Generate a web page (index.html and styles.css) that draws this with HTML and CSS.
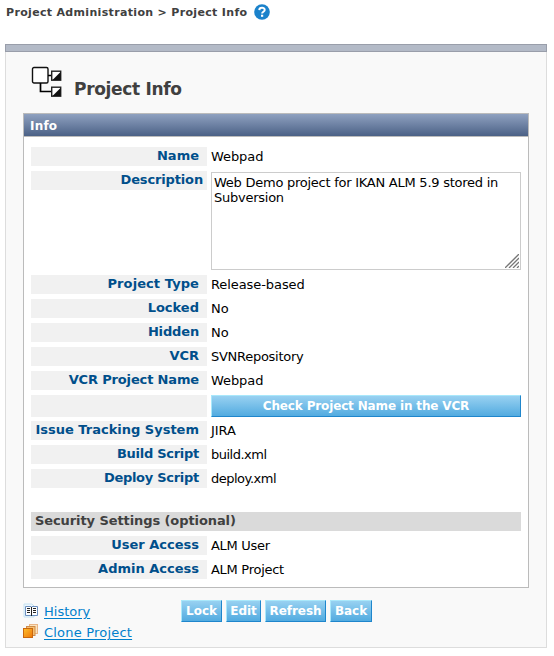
FILE: index.html
```html
<!DOCTYPE html>
<html lang="en">
<head>
<meta charset="utf-8">
<title>Project Info</title>
<link rel="stylesheet" href="styles.css">
</head>
<body>
<header class="crumbs">
  <span class="crumb-text">Project Administration &gt; Project Info</span>
  <svg class="help" width="16" height="16" viewBox="0 0 16 16"><circle cx="8" cy="8" r="7.8" fill="#1b82cb"/><path d="M5.3 6.1C5.4 3 10.7 3 10.7 6c0 1.8-2.6 1.8-2.6 3.6" fill="none" stroke="#fff" stroke-width="2"/><rect x="7" y="10.7" width="2.2" height="2.1" fill="#fff"/></svg>
</header>
<div class="bar"></div>
<main class="page">
  <div class="title">
    <svg width="32" height="32" viewBox="0 0 32 32"><rect x="1.5" y="1.5" width="15.500" height="15.500" rx="1.5" fill="#fff" stroke="#111" stroke-width="1.4"/><path d="M17 9.500h4M9.500 17v8.500h11" fill="none" stroke="#000" stroke-width="1.7"/><rect x="20.700" y="5.200" width="9" height="9" fill="#fff" stroke="#222" stroke-width="1.4"/><path d="M21.500 14h8V6z" fill="#111"/><rect x="20.700" y="21.200" width="9" height="9" fill="#fff" stroke="#222" stroke-width="1.4"/><path d="M21.500 30h8v-8z" fill="#111"/></svg>
    <h1>Project Info</h1>
  </div>
  <section class="panel">
    <h2>Info</h2>
    <div class="rows">
      <div class="row"><div class="label">Name</div><div class="value">Webpad</div></div>
      <div class="row tall"><div class="label flush snug">Description</div><div class="area"><span>Web Demo project for IKAN ALM 5.9 stored in<br>Subversion</span><svg class="grip" width="14" height="14" viewBox="0 0 14 14"><path d="M0 14L14 0M4 14L14 4M8 14l6-6M12 14l2-2" stroke="#777" stroke-width="1.3"/></svg></div></div>
      <div class="row"><div class="label loose">Project Type</div><div class="value">Release-based</div></div>
      <div class="row"><div class="label">Locked</div><div class="value">No</div></div>
      <div class="row"><div class="label snug">Hidden</div><div class="value">No</div></div>
      <div class="row"><div class="label">VCR</div><div class="value tight">SVNRepository</div></div>
      <div class="row"><div class="label snug">VCR Project Name</div><div class="value">Webpad</div></div>
      <div class="row action"><div class="label"></div><button class="btn wide">Check Project Name in the VCR</button></div>
      <div class="row"><div class="label">Issue Tracking System</div><div class="value">JIRA</div></div>
      <div class="row"><div class="label tight">Build Script</div><div class="value tighter">build.xml</div></div>
      <div class="row"><div class="label tight">Deploy Script</div><div class="value tighter">deploy.xml</div></div>
      <h3>Security Settings (optional)</h3>
      <div class="row"><div class="label">User Access</div><div class="value tight">ALM User</div></div>
      <div class="row"><div class="label">Admin Access</div><div class="value tight">ALM Project</div></div>
    </div>
  </section>
  <footer class="foot">
    <nav class="links">
      <div class="link"><svg width="16" height="16" viewBox="0 0 16 16"><path d="M1 1h8l2 2v11H1z" fill="#eef7fc" stroke="#c5e2f2"/><path d="M2.5 3.5H8l.5.5.5-.5h5.5v9H9l-.5.5-.5-.5H2.5z" fill="#fff" stroke="#6b8fc0"/><path d="M4 5.5h3M4 7.5h3M4 9.5h3M10 5.5h3M10 7.5h3M10 9.5h3" stroke="#222"/><path d="M8.5 4v9" stroke="#222"/></svg><a href="#">History</a></div>
      <div class="link"><svg width="16" height="16" viewBox="0 0 16 16"><defs><linearGradient id="o" x1="0" y1="0" x2="1" y2="1"><stop offset="0" stop-color="#ffc02c"/><stop offset="1" stop-color="#ee7508"/></linearGradient></defs><rect x="6.5" y=".5" width="8" height="9" fill="#fbe3bd" stroke="#e9b586"/><rect x="3.5" y="2.5" width="8.500" height="9" fill="#f5c173" stroke="#cd8a4a"/><rect x=".5" y="4.500" width="9" height="9" fill="url(#o)" stroke="#c9660e"/></svg><a href="#" class="clone">Clone Project</a></div>
    </nav>
    <div class="buttons"><button class="btn lock">Lock</button><button class="btn edit">Edit</button><button class="btn refresh">Refresh</button><button class="btn back">Back</button></div>
  </footer>
</main>
</body>
</html>
```
FILE: styles.css
```css
* { box-sizing: border-box; }
body {
  margin: 0;
  padding: 0 7px 0 5px;
  background: #fff;
  color: #000;
  font: 13px/16px Verdana, "DejaVu Sans", sans-serif;
}
.crumbs {
  display: flex;
  align-items: flex-start;
  height: 44px;
  padding: 4px 0 0 1px;
  color: #404040;
  font-size: 11px;
  font-weight: bold;
}
.crumb-text { width: 248px; padding-top: 1px; letter-spacing: .33px; white-space: nowrap; }
.help { display: block; }
.bar { height: 8px; background: #b3bac7; border: 1px solid #999eaa; }
.page {
  height: 596px;
  padding: 0 17px;
  background: #f9f9f9;
  border: 1px solid #ddd;
  border-top: 0;
}
.title { display: flex; height: 61px; padding: 14px 0 0 8px; }
.title svg { display: block; }
h1 {
  margin: 13px 0 0 11px;
  color: #404040;
  font-size: 17px;
  line-height: 20px;
  letter-spacing: -.32px;
  white-space: nowrap;
}
.panel { height: 475px; background: #fff; border: 1px solid #bbb; }
h2 {
  height: 23px;
  margin: 0;
  padding: 4px 6px 0;
  background: linear-gradient(#8fa1c0, #4b6186);
  border-bottom: 1px solid #bbb;
  color: #fff;
  font-size: 12px;
  line-height: 16px;
  letter-spacing: .2px;
}
.rows { padding: 10px 7px 0; }
.row { display: flex; gap: 4px; height: 19px; margin-bottom: 5px; }
.label {
  width: 176px;
  height: 19px;
  padding: 1px 8px 0 0;
  background: #f1f1f1;
  color: #004f8b;
  font-weight: bold;
  text-align: right;
  white-space: nowrap;
}
.label.flush { padding-right: 4px; }
.value { padding-top: 2px; letter-spacing: -.08px; white-space: nowrap; }
.snug { letter-spacing: -.15px; }
.loose { letter-spacing: .08px; }
.tight { letter-spacing: -.28px; }
.tighter { letter-spacing: -.5px; }
.row.tall { height: 99px; }
.area {
  position: relative;
  width: 310px;
  height: 98px;
  margin-top: 1px;
  padding: 2px 2px;
  border: 1px solid #ccc;
  line-height: 15px;
  letter-spacing: -.25px;
  white-space: nowrap;
}
.grip { position: absolute; right: 1px; bottom: 1px; }
.row.action, .row.action .label { height: 22px; }
.row.action { margin-bottom: 4px; }
h3 {
  height: 19px;
  margin: 24px 0 5px;
  padding: 1px 4px;
  background: #dadada;
  color: #404040;
  font-size: 13px;
  line-height: 16px;
  letter-spacing: -.09px;
}
.btn {
  height: 22px;
  margin: 0;
  padding: 0 0 1px;
  background: linear-gradient(#98d1f1, #52abe0);
  border: 1px solid;
  border-color: #a9e8fb #1f86cc #1f86cc #a9e8fb;
  color: #fff;
  font: bold 12px/16px Verdana, "DejaVu Sans", sans-serif;
  letter-spacing: -.05px;
  white-space: nowrap;
}
.wide { width: 310px; letter-spacing: -.15px; }
.foot { display: flex; padding-top: 12px; }
.links { width: 158px; }
.link { display: flex; gap: 5px; height: 21px; padding-top: 4px; }
.link svg { display: block; margin-top: -1px; }
a { color: #0080cc; text-underline-offset: 2px; }
.clone { letter-spacing: .2px; }
.buttons { display: flex; gap: 4px; }
.lock { width: 41px; }
.edit { width: 35px; }
.refresh { width: 61px; }
.back { width: 42px; }
```
